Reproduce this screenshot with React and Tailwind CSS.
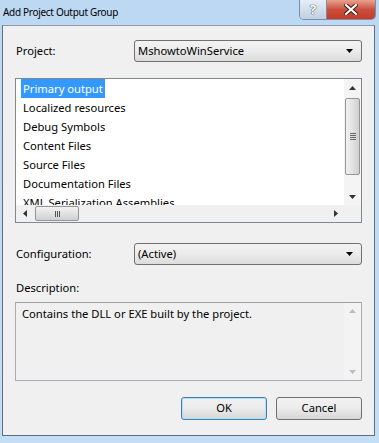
import React from 'react';

const items = [
  'Primary output',
  'Localized resources',
  'Debug Symbols',
  'Content Files',
  'Source Files',
  'Documentation Files',
  'XML Serialization Assemblies',
];

const Arrow = ({ dir, color = '#000' }) => {
  const pts = {
    down: '0,0 7,0 3.5,4',
    up: '0,4 7,4 3.5,0',
    left: '4,0 4,7 0,3.5',
    right: '0,0 0,7 4,3.5',
  }[dir];
  const vertical = dir === 'up' || dir === 'down';
  return (
    <svg width={vertical ? 7 : 4} height={vertical ? 4 : 7} viewBox={vertical ? '0 0 7 4' : '0 0 4 7'}>
      <polygon points={pts} fill={color} />
    </svg>
  );
};

const Combo = ({ value }) => (
  <div className="w-[228px] h-[22px] rounded-[3px] border border-[#707070] bg-gradient-to-b from-[#f3f3f3] via-[#ebebeb] to-[#dcdcdc] flex items-center justify-between pl-[3px] pr-[8px]">
    <span>{value}</span>
    <Arrow dir="down" />
  </div>
);

const Button = ({ children, primary }) => (
  <div
    className={`w-[86px] h-[23px] rounded-[3px] border flex items-center justify-center bg-gradient-to-b from-[#f2f2f2] via-[#ebebeb] to-[#d6d6d6] ${
      primary ? 'border-[#3c7fb1] shadow-[inset_0_0_0_1px_#b3e0f9]' : 'border-[#707070]'
    }`}
  >
    {children}
  </div>
);

export default function App() {
  return (
    <div
      className="w-[379px] h-[443px] bg-gradient-to-b from-[#bcd8f3] to-[#c4def5] text-[11.2px] text-black flex flex-col overflow-hidden"
      style={{ fontFamily: '"Noto Sans", "Liberation Sans", sans-serif' }}
    >
      {/* title bar */}
      <div className="h-[25px] flex items-start justify-between shrink-0">
        <div className="pl-[3px] pt-[4px] text-[10px] tracking-[-0.3px] leading-[16px]">Add Project Output Group</div>
        <div className="flex mr-[3px] rounded-b-[5px] overflow-hidden border border-t-0 border-[#7a8ea6]">
          <div className="w-[27px] h-[19px] bg-gradient-to-b from-[#e6eef7] to-[#bfcfe2] border-r border-[#7a8ea6] flex items-center justify-center text-white font-bold text-[13px] [text-shadow:0_0_1px_#333,0_0_1px_#333]">
            ?
          </div>
          <div className="w-[48px] h-[19px] bg-gradient-to-b from-[#e9a08e] via-[#c9503d] to-[#c63a26] flex items-center justify-center">
            <svg width="14" height="11" viewBox="0 0 14 11">
              <path d="M2 1 L12 10 M12 1 L2 10" stroke="#3a1a14" strokeWidth="4" strokeLinecap="square" />
              <path d="M2 1 L12 10 M12 1 L2 10" stroke="#fff" strokeWidth="2.2" strokeLinecap="square" />
            </svg>
          </div>
        </div>
      </div>

      {/* client area */}
      <div className="ml-[2px] mr-[4px] h-[411px] border border-[#5f6f80] border-t-[#8a98a8] bg-[#f0f0f0] flex flex-col pl-[12px] pr-[12px] pt-[14px]">
        <div className="flex items-center justify-between h-[22px]">
          <span className="pl-[1px]">Project:</span>
          <Combo value="MshowtoWinService" />
        </div>

        {/* list box */}
        <div className="mt-[16px] h-[145px] border border-[#828790] bg-white flex flex-col">
          <div className="flex flex-1 min-h-0">
            <div className="flex-1 overflow-hidden pl-[5px]">
              {items.map((t, i) => (
                <div key={t} className="h-[19px] flex items-center">
                  <span
                    className={`px-[2px] leading-[19px] whitespace-nowrap ${
                      i === 0 ? 'bg-[#3399ff] text-white' : ''
                    }`}
                  >
                    {t}
                  </span>
                </div>
              ))}
            </div>
            {/* vertical scrollbar */}
            <div className="w-[17px] bg-[#f4f4f4] flex flex-col items-center">
              <div className="h-[17px] flex items-center justify-center">
                <Arrow dir="up" color="#333" />
              </div>
              <div className="w-[15px] h-[77px] mt-[2px] rounded-[2px] border border-[#959595] bg-gradient-to-r from-[#f2f2f2] via-[#e2e2e2] to-[#cfcfcf] flex flex-col items-center justify-center gap-[1px]">
                <div className="w-[6px] h-[1px] bg-[#666]" />
                <div className="w-[6px] h-[1px] bg-[#666]" />
                <div className="w-[6px] h-[1px] bg-[#666]" />
                <div className="w-[6px] h-[1px] bg-[#666]" />
              </div>
              <div className="flex-1" />
              <div className="h-[17px] flex items-center justify-center">
                <Arrow dir="down" color="#333" />
              </div>
            </div>
          </div>
          {/* horizontal scrollbar */}
          <div className="h-[17px] flex shrink-0">
            <div className="flex-1 bg-[#f0f0f0] flex items-center">
              <div className="w-[17px] flex items-center justify-center">
                <Arrow dir="left" color="#333" />
              </div>
              <div className="w-[44px] h-[15px] ml-[2px] rounded-[2px] border border-[#959595] bg-gradient-to-b from-[#f2f2f2] via-[#e2e2e2] to-[#cfcfcf] flex items-center justify-center gap-[1px]">
                <div className="w-[1px] h-[6px] bg-[#555]" />
                <div className="w-[1px] h-[6px] bg-[#555]" />
                <div className="w-[1px] h-[6px] bg-[#555]" />
              </div>
              <div className="flex-1" />
              <div className="w-[17px] flex items-center justify-center">
                <Arrow dir="right" color="#333" />
              </div>
            </div>
            <div className="w-[17px] bg-[#f0f0f0]" />
          </div>
        </div>

        <div className="mt-[20px] flex items-center justify-between h-[22px]">
          <span className="pl-[1px]">Configuration:</span>
          <Combo value="(Active)" />
        </div>

        <div className="mt-[15px] h-[16px] leading-[16px] pl-[1px]">Description:</div>

        <div className="mt-[6px] h-[79px] border border-[#abadb3] border-t-[#a0a0a0] flex">
          <div className="flex-1 pl-[6px] pt-[3px] leading-[16px]">Contains the DLL or EXE built by the project.</div>
          <div className="w-[17px] bg-[#f3f3f3] flex flex-col items-center justify-between py-[6px]">
            <Arrow dir="up" color="#bdbdbd" />
            <Arrow dir="down" color="#bdbdbd" />
          </div>
        </div>

        <div className="mt-[16px] flex justify-end gap-[9px]">
          <Button primary>OK</Button>
          <Button>Cancel</Button>
        </div>
      </div>
    </div>
  );
}
